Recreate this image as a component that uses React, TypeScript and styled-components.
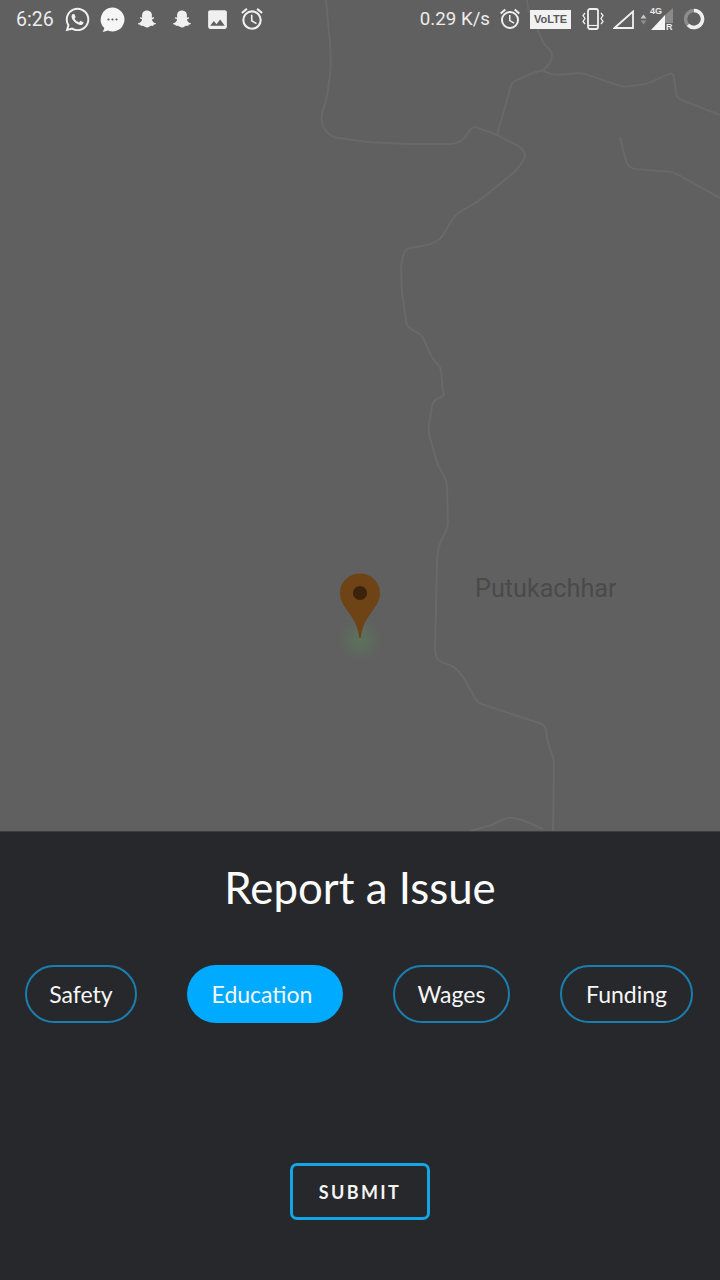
import React from "react";
import styled, { createGlobalStyle } from "styled-components";
import { FaWhatsapp, FaSnapchatGhost } from "react-icons/fa";
import { MdImage, MdOutlineAlarm } from "react-icons/md";

const Global = createGlobalStyle`
  html, body { margin: 0; padding: 0; background: #26282c; }
  #root { width: 720px; height: 1280px; }
`;

const Screen = styled.div`
  width: 720px;
  height: 1280px;
  display: flex;
  flex-direction: column;
  overflow: hidden;
  font-family: "Lato", "Liberation Sans", sans-serif;
`;

const MapArea = styled.div`
  position: relative;
  flex: 1;
  background: #606060;
  overflow: hidden;
`;

const RoadLayer = styled.svg`
  position: absolute;
  inset: 0;
`;

const StatusBar = styled.div`
  position: absolute;
  top: 0;
  left: 0;
  right: 0;
  height: 38px;
  display: flex;
  align-items: center;
  justify-content: space-between;
  padding: 0 15px 0 16px;
  color: #f0f0f0;
`;

const StatusGroup = styled.div`
  display: flex;
  align-items: center;
`;

const StatusText = styled.span<{ $mr?: number; $size: number }>`
  font-family: "Roboto", sans-serif;
  font-size: ${(p) => p.$size}px;
  color: #ececec;
  margin-right: ${(p) => p.$mr ?? 0}px;
`;

const IconSlot = styled.span<{ $width: number; $justify?: string }>`
  width: ${(p) => p.$width}px;
  height: 30px;
  display: flex;
  align-items: center;
  justify-content: ${(p) => p.$justify ?? "center"};
`;

const VolteBadge = styled.span`
  width: 41px;
  height: 19px;
  background: #f2f2f2;
  color: #585858;
  font-family: "Liberation Sans", sans-serif;
  font-weight: 700;
  font-size: 11px;
  display: flex;
  align-items: center;
  justify-content: center;
`;

const NetworkTag = styled.span<{ $left: number; $top: number }>`
  position: absolute;
  left: ${(p) => p.$left}px;
  top: ${(p) => p.$top}px;
  font-family: "Liberation Sans", sans-serif;
  font-weight: 700;
  font-size: 9px;
  line-height: 9px;
  color: #ececec;
`;

const SignalWrap = styled.div`
  position: relative;
  width: 24px;
  height: 24px;
  display: flex;
`;

const PlaceLabel = styled.span`
  position: absolute;
  left: 475px;
  top: 574px;
  font-family: "Roboto", sans-serif;
  font-size: 25.2px;
  line-height: 30px;
  color: #4a4a4a;
`;

const Pin = styled.svg`
  position: absolute;
  left: 330px;
  top: 570px;
`;

const Sheet = styled.section`
  height: 449px;
  box-sizing: border-box;
  background: #26282c;
  border-top: 1px solid #3b3d40;
  display: flex;
  flex-direction: column;
  align-items: center;
  padding-top: 27px;
`;

const Title = styled.h1`
  margin: 0;
  font-family: "Lato", sans-serif;
  font-weight: 400;
  font-size: 43.8px;
  line-height: 56px;
  color: #fbfbfb;
`;

const ChipRow = styled.div`
  align-self: stretch;
  display: flex;
  gap: 50px;
  padding-left: 25px;
  margin-top: 50px;
`;

const Chip = styled.button<{ $active?: boolean; $width: number; $inset?: number }>`
  width: ${(p) => p.$width}px;
  height: 58px;
  box-sizing: border-box;
  padding: 0 ${(p) => p.$inset ?? 0}px 0 0;
  border-radius: 29px;
  border: ${(p) => (p.$active ? "none" : "2px solid #1a7fae")};
  background: ${(p) => (p.$active ? "#00aaff" : "transparent")};
  color: #f6f6f6;
  font-family: "Lato", sans-serif;
  font-size: 23px;
`;

const SubmitButton = styled.button`
  margin-top: 140px;
  width: 140px;
  height: 57px;
  box-sizing: border-box;
  border: 3px solid #14a5e6;
  border-radius: 7px;
  background: transparent;
  color: #f4f4f4;
  font-family: "Lato", sans-serif;
  font-weight: 700;
  font-size: 18px;
  letter-spacing: 2.4px;
`;

type Pt = [number, number];

const roadLines: Pt[][] = [
  [[326,0],[330,43],[331,67],[327,97],[321,117],[323,128],[332,137],[367,142],[407,144],[455,144],[463,140],[473,126],[497,135],[522,148],[526,156],[517,170],[480,200],[455,215],[440,240],[428,245],[405,249],[402,260],[401,267],[402,293],[407,327],[422,335],[432,358],[441,368],[443,393],[445,395],[433,401],[428,430],[437,463],[447,482],[448,527],[439,545],[437,560],[435,653],[438,661],[453,666],[462,675],[478,703],[545,725],[548,743],[554,760],[553,831]],
  [[470,831],[492,825],[508,817],[523,820],[543,829]],
  [[497,135],[512,82],[538,71],[543,71],[550,63],[553,53],[543,43],[538,30],[528,10],[527,0]],
  [[543,71],[553,75],[582,73],[623,87],[647,84],[673,72],[677,98],[720,115]],
  [[620,137],[627,165],[633,169],[673,172],[720,198]],
];

function roundedPath(pts: Pt[], radius = 5): string {
  let d = `M${pts[0][0]} ${pts[0][1]}`;
  for (let i = 1; i < pts.length - 1; i++) {
    const [x, y] = pts[i];
    const [px, py] = pts[i - 1];
    const [nx, ny] = pts[i + 1];
    const l1 = Math.hypot(x - px, y - py);
    const l2 = Math.hypot(nx - x, ny - y);
    const r1 = Math.min(radius, l1 / 2) / l1;
    const r2 = Math.min(radius, l2 / 2) / l2;
    d += ` L${x - (x - px) * r1} ${y - (y - py) * r1}`;
    d += ` Q${x} ${y} ${x + (nx - x) * r2} ${y + (ny - y) * r2}`;
  }
  const last = pts[pts.length - 1];
  return `${d} L${last[0]} ${last[1]}`;
}

const MessageIcon = () => (
  <svg width="25" height="25" viewBox="0 0 25 25">
    <path d="M12.5 0.5a12 12 0 1 1-4.6 23.1c-1.6.8-3.5 1.2-5.4 1 1-1 1.7-2.2 1.8-3.600A12 12 0 0 1 12.5.5z" fill="#f6f6f6" />
    <circle cx="8.500" cy="12.500" r="1.100" fill="#606060" />
    <circle cx="12.500" cy="12.500" r="1.100" fill="#606060" />
    <circle cx="16.500" cy="12.500" r="1.100" fill="#606060" />
  </svg>
);

const VibrateIcon = () => (
  <svg width="24" height="22" viewBox="0 0 24 22" fill="none" stroke="#f0f0f0">
    <rect x="8" y="1" width="10" height="20" rx="2" strokeWidth="1.800" />
    <path d="M8 17.500h10" strokeWidth="1.200" />
    <path d="M5 5l-2 2.500 2 3-2 3 2 2.500M21 5l2 2.500-2 3 2 3-2 2.500" strokeWidth="1.300" />
  </svg>
);

const CellSignal = () => (
  <svg width="21" height="19" viewBox="0 0 21 19">
    <path d="M1.500 18 L20 1.500 V18 Z" fill="none" stroke="#f0f0f0" strokeWidth="1.800" />
  </svg>
);

const UpDown = () => (
  <svg width="7" height="11" viewBox="0 0 7 11">
    <path d="M3.500 0.500 L6.500 4.500 H0.500 Z" fill="#c8c8c8" />
    <path d="M3.500 10.500 L6.500 6.500 H0.500 Z" fill="#8f8f8f" />
  </svg>
);

const DataSignal = () => (
  <svg width="24" height="24" viewBox="0 0 24 24">
    <path d="M15 8 L23 1 V16 H15 Z" fill="#8a8a8a" />
    <path d="M1 23 L15 8 V23 Z" fill="#f5f5f5" />
  </svg>
);

const BatteryRing = () => (
  <svg width="22" height="22" viewBox="0 0 22 22">
    <circle cx="11" cy="11" r="8.500" fill="none" stroke="#8d8d8d" strokeWidth="3.500" />
    <path d="M11 2.500 A8.500 8.500 0 1 1 5 17" fill="none" stroke="#efefef" strokeWidth="3.500" />
  </svg>
);

const issues = [
  { label: "Safety", width: 112 },
  { label: "Education", width: 156, active: true, inset: 6 },
  { label: "Wages", width: 117 },
  { label: "Funding", width: 133 },
];

export default function App() {
  return (
    <Screen>
      <Global />
      <MapArea>
        <RoadLayer width="720" height="831" viewBox="0 0 720 831">
          {roadLines.map((pts) => (
            <path key={pts.join()} d={roundedPath(pts)} fill="none" stroke="#696969" strokeWidth="2" />
          ))}
        </RoadLayer>
        <PlaceLabel>Putukachhar</PlaceLabel>
        <Pin width="60" height="95" viewBox="0 0 60 95">
          <defs>
            <radialGradient id="glow">
              <stop offset="0%" stopColor="#5b725b" />
              <stop offset="55%" stopColor="#5e695e" />
              <stop offset="100%" stopColor="#606060" />
            </radialGradient>
          </defs>
          <circle cx="30" cy="70" r="22" fill="url(#glow)" />
          <path
            d="M30 3.500C19 3.500 10 12 10 23c0 7 3.200 12 8 18.500 5 7 10 14 11.300 26.500h1.400C32 55.500 37 48.500 42 41.500 46.800 35 50 30 50 23 50 12 41 3.500 30 3.500z"
            fill="#6e4416"
          />
          <circle cx="30" cy="23" r="7" fill="#3a220b" />
        </Pin>
        <StatusBar>
          <StatusGroup>
            <StatusText $size={19.5} $mr={6}>6:26</StatusText>
            <IconSlot $width={35}><FaWhatsapp size={27} /></IconSlot>
            <IconSlot $width={35}><MessageIcon /></IconSlot>
            <IconSlot $width={35}><FaSnapchatGhost size={18} /></IconSlot>
            <IconSlot $width={35}><FaSnapchatGhost size={18} /></IconSlot>
            <IconSlot $width={35}><MdImage size={25} /></IconSlot>
            <IconSlot $width={35}><MdOutlineAlarm size={26} /></IconSlot>
          </StatusGroup>
          <StatusGroup>
            <StatusText $size={18.7}>0.29 K/s</StatusText>
            <IconSlot $width={40}><MdOutlineAlarm size={24} /></IconSlot>
            <VolteBadge>VoLTE</VolteBadge>
            <IconSlot $width={42}><VibrateIcon /></IconSlot>
            <IconSlot $width={27} $justify="flex-start"><CellSignal /></IconSlot>
            <IconSlot $width={10} $justify="flex-start"><UpDown /></IconSlot>
            <SignalWrap>
              <DataSignal />
              <NetworkTag $left={0} $top={0}>4G</NetworkTag>
              <NetworkTag $left={16} $top={16}>R</NetworkTag>
            </SignalWrap>
            <IconSlot $width={31} $justify="flex-end"><BatteryRing /></IconSlot>
          </StatusGroup>
        </StatusBar>
      </MapArea>
      <Sheet>
        <Title>Report a Issue</Title>
        <ChipRow>
          {issues.map((c) => (
            <Chip key={c.label} $active={c.active} $width={c.width} $inset={c.inset}>
              {c.label}
            </Chip>
          ))}
        </ChipRow>
        <SubmitButton>SUBMIT</SubmitButton>
      </Sheet>
    </Screen>
  );
}
